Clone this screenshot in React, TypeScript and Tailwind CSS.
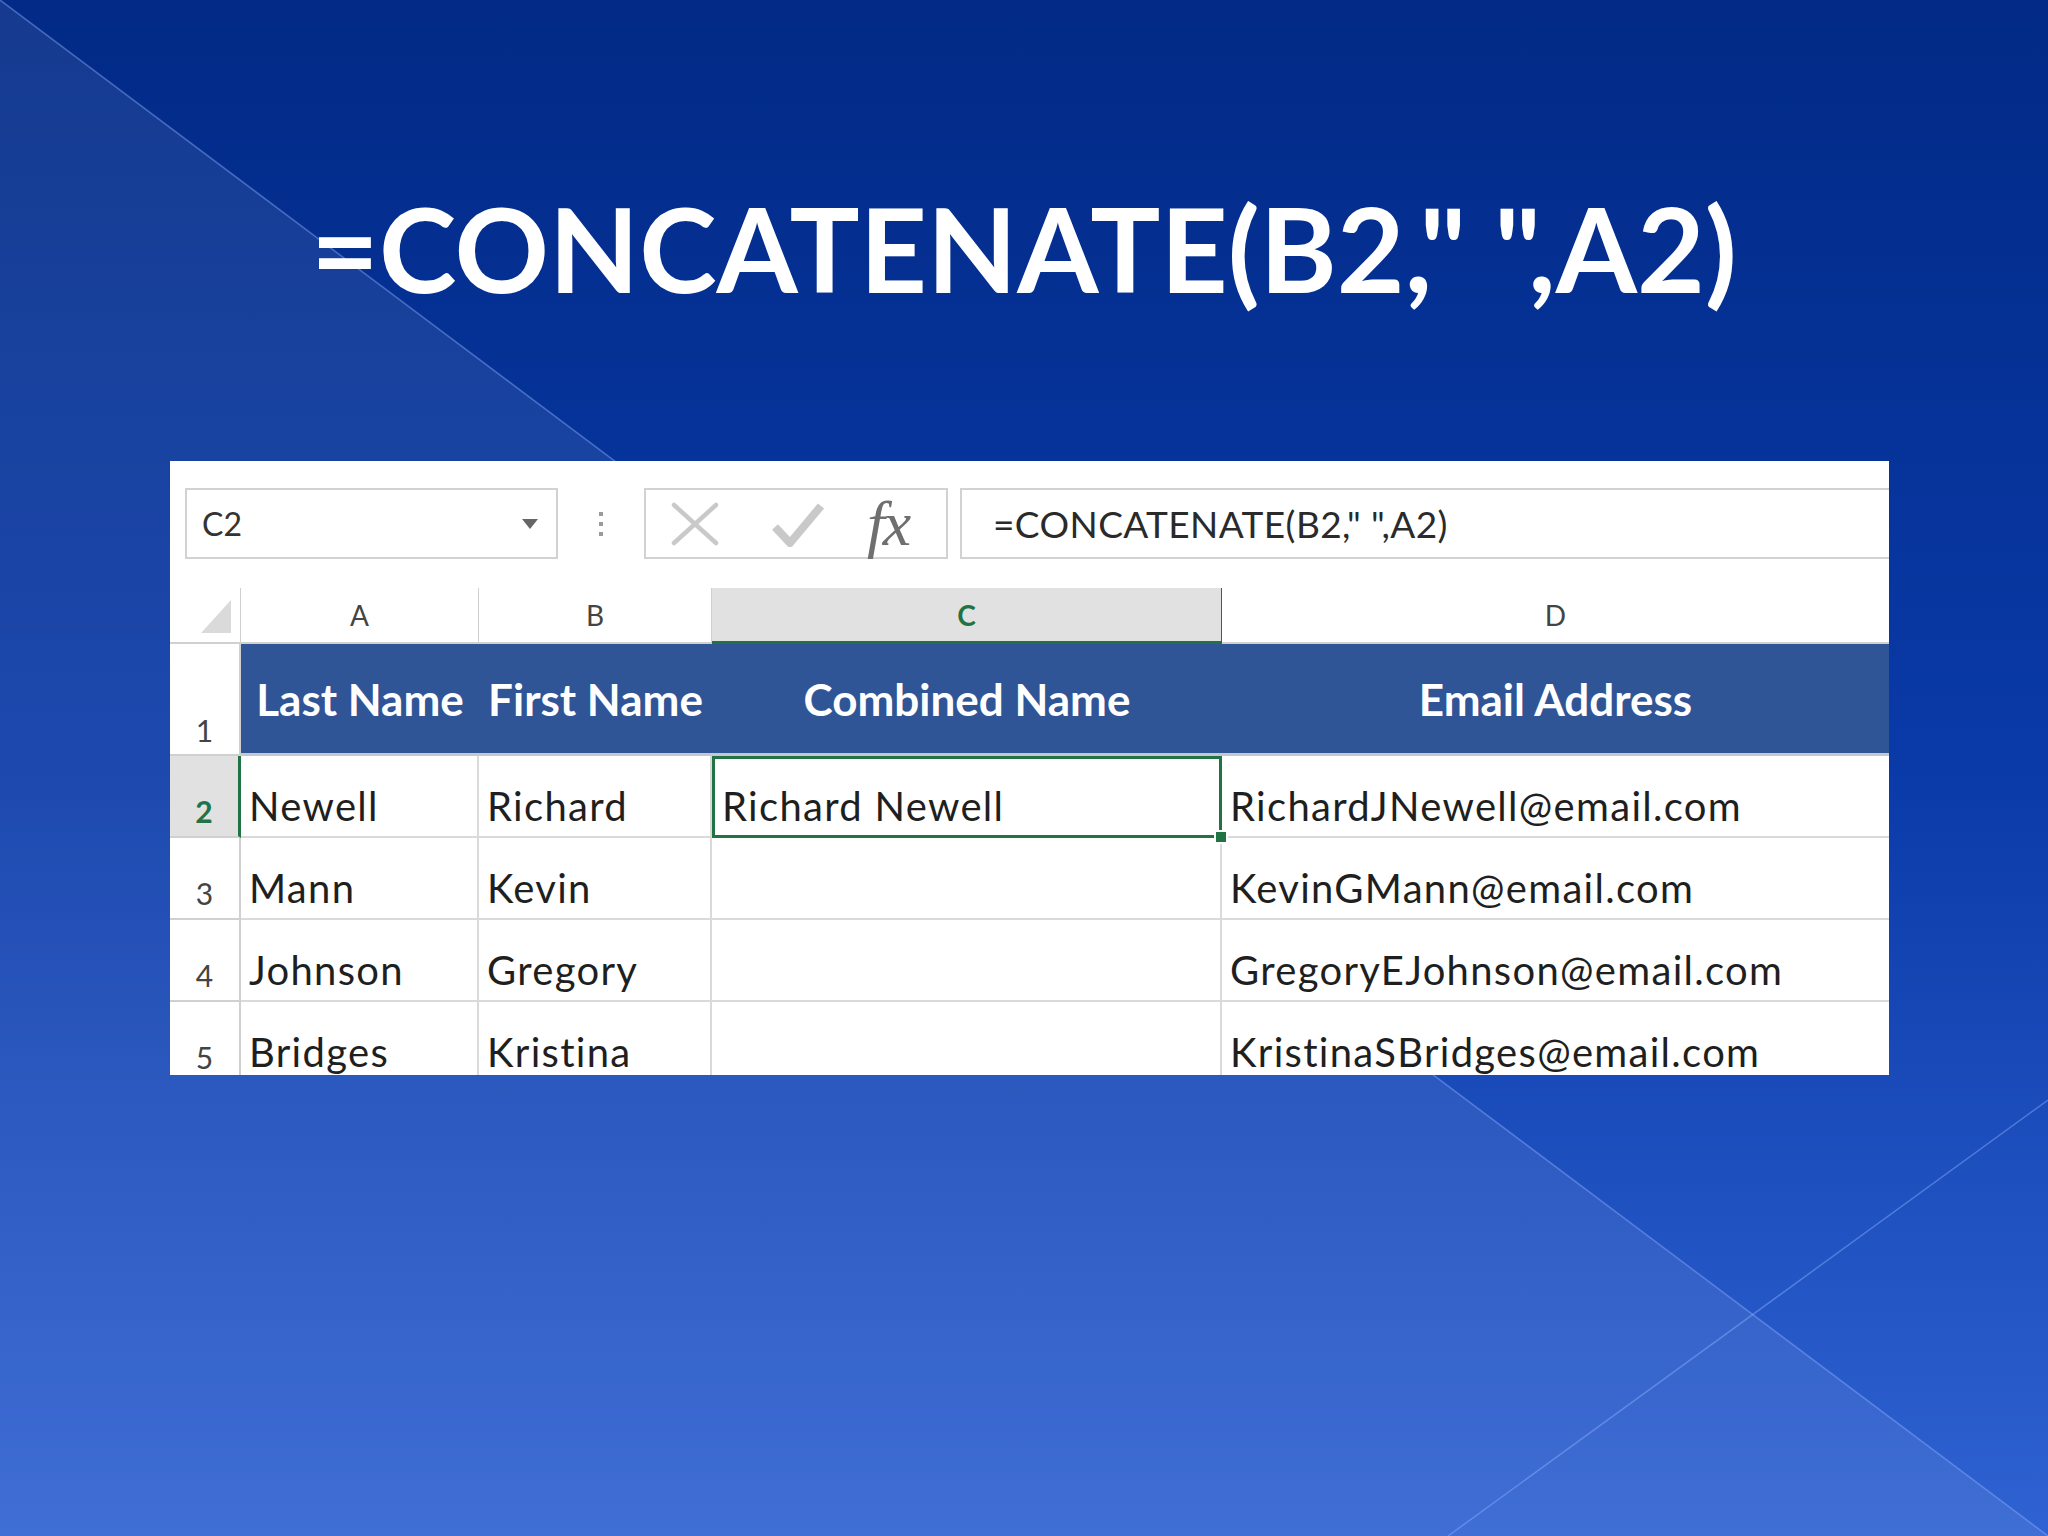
import React from "react";

const cols = "grid grid-cols-[71px_238px_233px_510px_1fr]";

const rows = [
  { n: "2", last: "Newell", first: "Richard", combined: "Richard Newell", email: "RichardJNewell@email.com" },
  { n: "3", last: "Mann", first: "Kevin", combined: "", email: "KevinGMann@email.com" },
  { n: "4", last: "Johnson", first: "Gregory", combined: "", email: "GregoryEJohnson@email.com" },
  { n: "5", last: "Bridges", first: "Kristina", combined: "", email: "KristinaSBridges@email.com" },
];

function FormulaBar() {
  return (
    <div className="flex h-[71px] items-stretch">
      {/* name box */}
      <div className="ml-[15px] flex w-[373px] items-center justify-between border-2 border-[#d2d2d2] pl-[15px] pr-[18px]">
        <span className="text-[32px] leading-none text-[#333]">C2</span>
        <svg width="16" height="10" viewBox="0 0 16 10">
          <polygon points="0,0 16,0 8,10" fill="#666" />
        </svg>
      </div>
      {/* splitter dots */}
      <div className="flex w-[86px] flex-col items-center justify-center gap-[6px]">
        <span className="h-[4px] w-[4px] bg-[#9a9a9a]" />
        <span className="h-[4px] w-[4px] bg-[#9a9a9a]" />
        <span className="h-[4px] w-[4px] bg-[#9a9a9a]" />
      </div>
      {/* cancel / enter / fx */}
      <div className="flex w-[304px] items-center border-2 border-[#d2d2d2] pl-[25px]">
        <svg width="48" height="44" viewBox="0 0 48 44">
          <path d="M3 3 L45 41 M45 3 L3 41" stroke="#c9c9c9" strokeWidth="4.5" strokeLinecap="round" fill="none" />
        </svg>
        <svg className="ml-[52px]" width="54" height="46" viewBox="0 0 54 46">
          <path d="M4 26 L19 42 L50 5" stroke="#c9c9c9" strokeWidth="8" strokeLinejoin="round" fill="none" />
        </svg>
        <span className="ml-[42px] font-['Liberation_Serif',serif] text-[64px] italic leading-none tracking-[-2px] text-[#6f6f6f]">
          fx
        </span>
      </div>
      {/* formula box */}
      <div className="ml-[12px] flex flex-1 items-center border-2 border-r-0 border-[#d2d2d2] pl-[31px]">
        <span className="text-[37px] leading-none tracking-[0.4px] text-[#2a2a2a]">=CONCATENATE(B2," ",A2)</span>
      </div>
    </div>
  );
}

function ColumnHeaders() {
  const letter = "flex items-center justify-center border-b-2 border-r border-[#d0d0d0] text-[28px] text-[#444]";
  return (
    <div className={`${cols} h-[56px]`}>
      <div className="flex items-end justify-end border-b-2 border-r border-[#d0d0d0] pb-[9px] pr-[9px]">
        <svg width="30" height="33" viewBox="0 0 30 33">
          <polygon points="30,0 30,33 0,33" fill="#dadada" />
        </svg>
      </div>
      <div className={letter}>A</div>
      <div className={letter}>B</div>
      <div className="flex items-center justify-center border-b-[3px] border-r border-[#217346] bg-[#e1e1e1] text-[28px] font-bold text-[#217346]">
        C
      </div>
      <div className="flex items-center justify-center border-b-2 border-[#d0d0d0] text-[28px] text-[#444]">D</div>
    </div>
  );
}

function HeaderRow() {
  const cell = "flex items-center justify-center border-b-[3px] border-[#c4c8d0] bg-[#2f5597] text-[44px] font-bold text-white";
  return (
    <div className={`${cols} h-[112px]`}>
      <div className="flex items-end justify-center border-b-2 border-r-2 border-[#d0d0d0] pb-[6px] text-[30px] leading-[36px] text-[#444]">
        1
      </div>
      <div className={cell}>Last Name</div>
      <div className={cell}>First Name</div>
      <div className={cell}>Combined Name</div>
      <div className={cell}>Email Address</div>
    </div>
  );
}

function DataRow({ r, selected }: { r: (typeof rows)[number]; selected: boolean }) {
  const cell = "flex items-end border-b-2 border-r-2 border-[#dadada] pb-[6px] pl-[8px] text-[40px] leading-[48px] tracking-[1.3px] text-[#1f1f1f]";
  return (
    <div className={`${cols} h-[82px]`}>
      {selected ? (
        <div className="flex items-end justify-center border-b-2 border-r-[3px] border-b-[#d0d0d0] border-r-[#217346] bg-[#e1e1e1] pb-[7px] text-[30px] font-bold leading-[36px] text-[#217346]">
          {r.n}
        </div>
      ) : (
        <div className="flex items-end justify-center border-b-2 border-r-2 border-[#d0d0d0] pb-[7px] text-[30px] leading-[36px] text-[#444]">
          {r.n}
        </div>
      )}
      <div className={cell}>{r.last}</div>
      <div className={cell}>{r.first}</div>
      {selected ? (
        <div className="relative flex items-end border-[3px] border-[#217346] pb-[5px] pl-[7px] text-[40px] leading-[48px] tracking-[1.3px] text-[#1f1f1f]">
          {r.combined}
          <span className="absolute -bottom-[9px] -right-[9px] h-[14px] w-[14px] border-2 border-white bg-[#217346]" />
        </div>
      ) : (
        <div className={cell}>{r.combined}</div>
      )}
      <div className="flex items-end border-b-2 border-[#dadada] pb-[6px] pl-[8px] text-[40px] leading-[48px] tracking-[1.3px] text-[#1f1f1f]">
        {r.email}
      </div>
    </div>
  );
}

export default function App() {
  return (
    <div className="relative min-h-[1536px] w-full overflow-hidden bg-linear-to-b from-[#022a86] via-[#0a3aa8] to-[#2f62d2]">
      {/* background facets */}
      <svg className="absolute inset-0 h-full w-full" viewBox="0 0 2048 1536" preserveAspectRatio="none">
        <polygon points="0,0 2048,1536 0,1536" fill="#ffffff" fillOpacity="0.08" />
        <line x1="0" y1="0" x2="2048" y2="1536" stroke="#8fb0ff" strokeOpacity="0.45" strokeWidth="1.5" />
        <line x1="1448" y1="1536" x2="2048" y2="1100" stroke="#8fb0ff" strokeOpacity="0.45" strokeWidth="1.5" />
      </svg>

      <div className="relative flex flex-col pt-[190px] font-['Lato',sans-serif]">
        <h1 className="text-center text-[117px] font-bold leading-none text-white">=CONCATENATE(B2," ",A2)</h1>

        <div className="ml-[170px] mt-[154px] h-[614px] w-[1719px] overflow-hidden bg-white pt-[27px]">
          <FormulaBar />
          <div className="mt-[29px]">
            <ColumnHeaders />
            <HeaderRow />
            {rows.map((r, i) => (
              <DataRow key={r.n} r={r} selected={i === 0} />
            ))}
          </div>
        </div>
      </div>
    </div>
  );
}
